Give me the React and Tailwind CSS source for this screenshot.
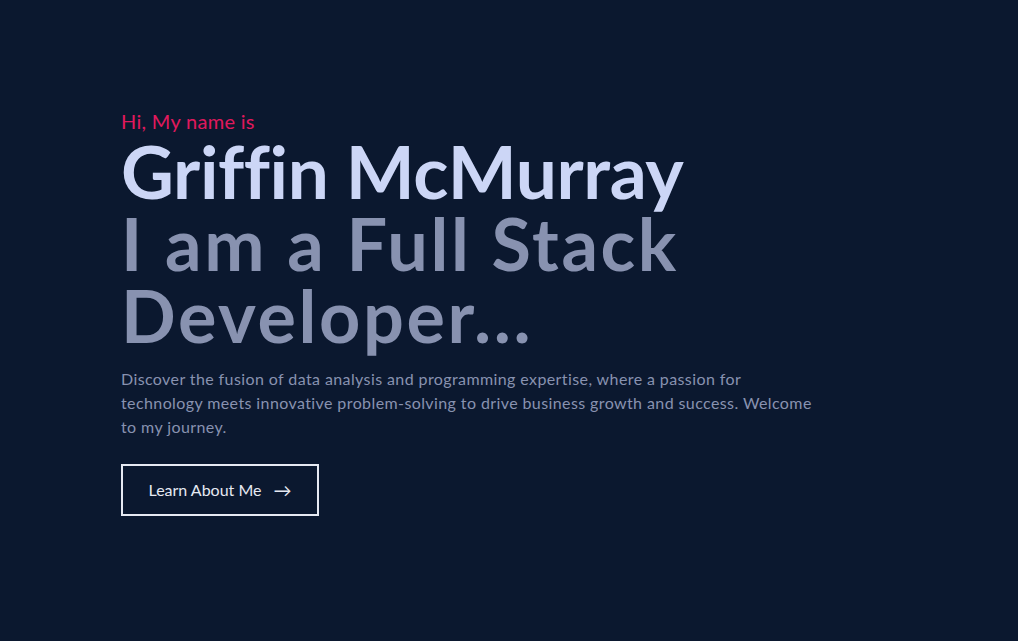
export default function App() {
  return (
    <div
      className="min-h-[641px] w-full bg-[#0b182f] pl-[121px] pt-[107px]"
      style={{ fontFamily: "Lato, 'Open Sans', sans-serif" }}
    >
      <p className="text-[20px] leading-[28px] tracking-[0.3px] text-[#e0195d]">Hi, My name is</p>
      <h1 className="text-[73px] font-bold leading-[72px] tracking-[-0.4px] text-[#ccd6f6]">
        Griffin McMurray
      </h1>
      <h2 className="w-[600px] text-[72px] font-bold leading-[72px] tracking-[2.6px] text-[#8892b0]">
        I am a Full Stack Developer...
      </h2>
      <p className="mt-[16px] w-[760px] text-[16px] leading-[24px] tracking-[0.4px] text-[#8892b0]">
        Discover the fusion of data analysis and programming expertise, where a passion for
        <br />
        technology meets innovative problem-solving to drive business growth and success. Welcome
        <br />
        to my journey.
      </p>
      <button className="mt-[25px] flex h-[52px] w-[198px] items-center justify-center gap-[12px] border-2 border-[#e6e9f2] text-[16px] text-[#e6e9f2]">
        <span>Learn About Me</span>
        <span className="text-[18px]">→</span>
      </button>
    </div>
  );
}
